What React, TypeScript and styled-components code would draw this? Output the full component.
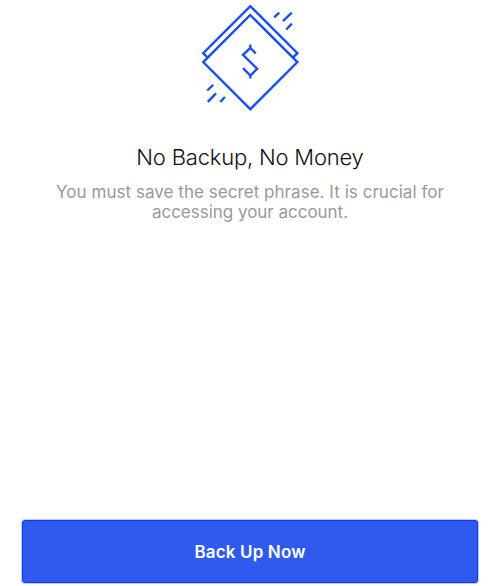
import React from "react";
import styled, { createGlobalStyle } from "styled-components";

const GlobalStyle = createGlobalStyle`
  *, *::before, *::after { box-sizing: border-box; }
  body {
    margin: 0;
    background: #ffffff;
    font-family: Inter, "Liberation Sans", sans-serif;
  }
`;

const Screen = styled.main`
  display: flex;
  flex-direction: column;
  align-items: center;
  width: 500px;
  height: 586px;
  padding: 0 22px 3px;
  overflow: hidden;
`;

const Illustration = styled.svg`
  display: block;
  flex: none;
  width: 120px;
  height: 120px;
  fill: none;
  stroke: #1a50f0;
  stroke-width: 2.4;
`;

const Title = styled.h1`
  margin: 23px 0 0;
  color: #111111;
  font-size: 22px;
  font-weight: 300;
  line-height: 28px;
  letter-spacing: -0.2px;
  white-space: nowrap;
`;

const Description = styled.p`
  display: flex;
  flex-direction: column;
  align-items: center;
  margin: 11px 0 0;
  color: #999999;
  font-size: 17px;
  font-weight: 400;
  line-height: 20px;
  white-space: nowrap;
`;

const Line = styled.span<{ $tracking: number }>`
  letter-spacing: ${({ $tracking }) => $tracking}px;
`;

const PrimaryButton = styled.button`
  width: 100%;
  height: 63px;
  margin-top: auto;
  padding: 1px 0 0;
  border: 1px solid #0b3dfa;
  border-radius: 3px;
  background: #305aee;
  box-shadow: 0 0 0 1px rgba(48, 90, 238, 0.3);
  color: #ffffff;
  font-family: inherit;
  font-size: 17px;
  font-weight: 600;
  letter-spacing: 0.15px;
`;

function BanknotesIcon() {
  return (
    <Illustration viewBox="190 0 120 120" aria-hidden="true">
      <path d="M208 58 203.2 53.2 250.3 6.1 297.4 53.2 292.6 58" />
      <path d="M250.3 15 297.4 62.1 250.3 109.2 203.2 62.1Z" />
      <path d="M250.3 44.5V48M255.8 53.5 250.3 48 243 54.8 257.2 68.8 250.3 75.5 243 68.2M250.3 75.5V78.5" />
      <path d="M274.2 17.4 279.2 12.6M283 21.1 291.8 12.7M286.2 29.5 291.9 23.7" />
      <path d="M207.2 90.5 213.2 84.8M207.8 101.8 216 93.3M220.2 101.8 225 97" />
    </Illustration>
  );
}

export default function App() {
  return (
    <>
      <GlobalStyle />
      <Screen>
        <BanknotesIcon />
        <Title>No Backup, No Money</Title>
        <Description>
          <Line $tracking={0.04}>You must save the secret phrase. It is crucial for</Line>
          <Line $tracking={-0.02}>accessing your account.</Line>
        </Description>
        <PrimaryButton type="button">Back Up Now</PrimaryButton>
      </Screen>
    </>
  );
}
